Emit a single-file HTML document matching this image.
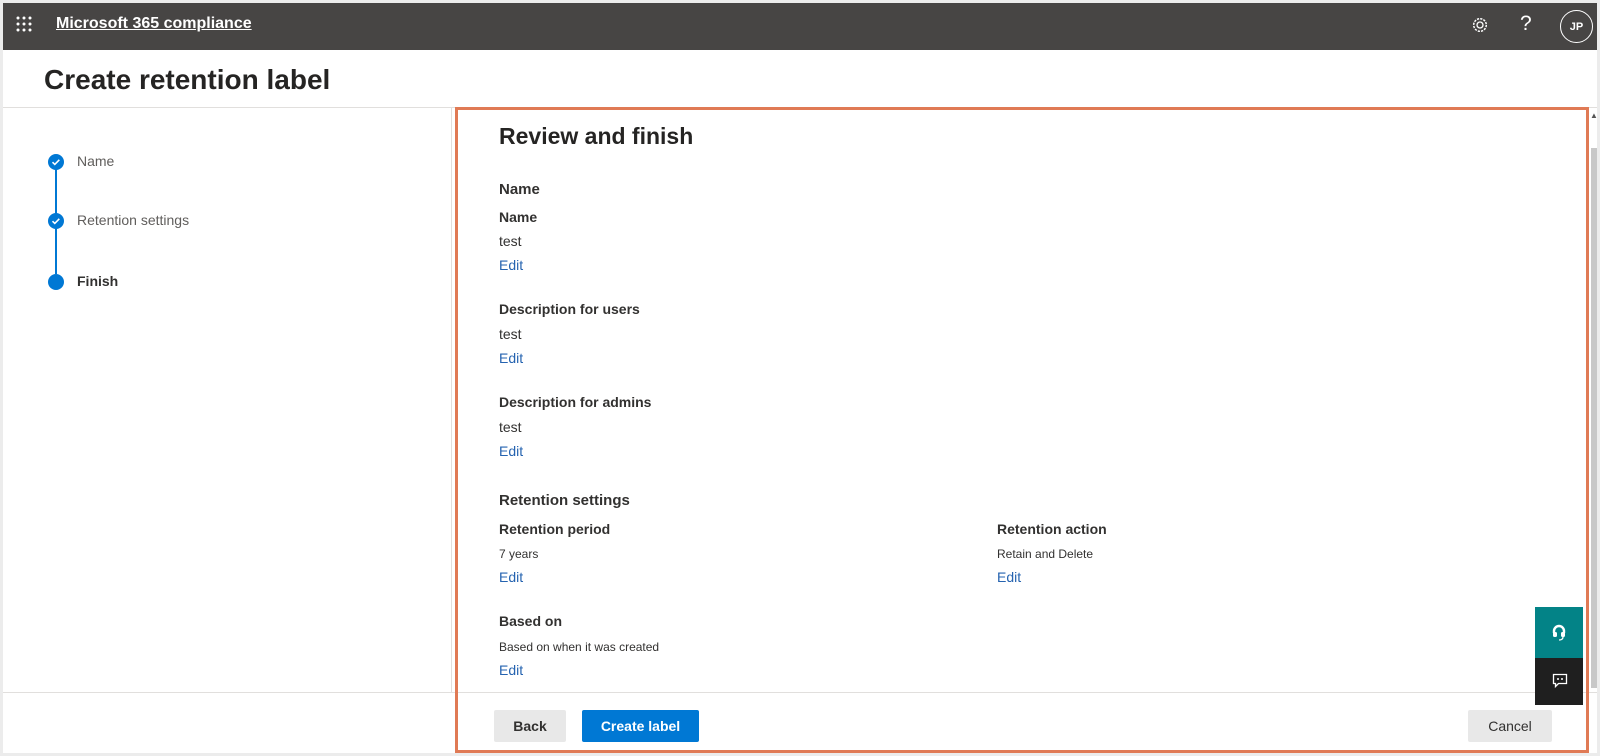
<!DOCTYPE html>
<html><head><meta charset="utf-8"><style>
*{margin:0;padding:0;box-sizing:border-box}
body{width:1600px;height:756px;background:#ececec;font-family:"Segoe UI","Liberation Sans",sans-serif;color:#323130;position:relative;overflow:hidden}
.app{position:absolute;left:3px;top:3px;width:1594px;height:750px;background:#fff}
.top{position:absolute;left:0;top:0;width:1594px;height:47px;background:#474544;color:#fff}
.abs{position:absolute}
.t{position:absolute;white-space:nowrap}
.edit{color:#2563b0;font-size:14px}
.lbl{font-size:14px;font-weight:600}
.val{font-size:14px}
.sm{font-size:12px}
.btn{position:absolute;height:32px;border-radius:2px;font-size:14px;font-weight:600;display:flex;align-items:center;justify-content:center}
</style></head><body>
<div class="app">
 <div class="top">
  <svg class="abs" style="left:13px;top:13px" width="16" height="16"><g fill="#fff">
   <circle cx="2" cy="2" r="1.5"/><circle cx="8" cy="2" r="1.5"/><circle cx="14" cy="2" r="1.5"/>
   <circle cx="2" cy="8" r="1.5"/><circle cx="8" cy="8" r="1.5"/><circle cx="14" cy="8" r="1.5"/>
   <circle cx="2" cy="14" r="1.5"/><circle cx="8" cy="14" r="1.5"/><circle cx="14" cy="14" r="1.5"/></g></svg>
  <div class="t" style="left:53px;top:12px;font-size:16px;font-weight:700;text-decoration:underline">Microsoft 365 compliance</div>
  <svg class="abs" style="left:1468px;top:13px" width="18" height="18" viewBox="0 0 18 18"><circle cx="9" cy="9" r="3" fill="none" stroke="#fff" stroke-width="1.3"/><circle cx="9" cy="9" r="6.3" fill="none" stroke="#fff" stroke-width="1.5" stroke-dasharray="2.2 1.1"/></svg>
  <div class="t" style="left:1517px;top:9px;font-size:21px;font-weight:300">?</div>
  <div class="abs" style="left:1557px;top:7px;width:33px;height:33px;border:1.5px solid #fff;border-radius:50%;font-size:11px;display:flex;align-items:center;justify-content:center;font-weight:600">JP</div>
 </div>
 <div class="t" style="left:41px;top:61px;font-size:28px;font-weight:700;color:#252423">Create retention label</div>
 <div class="abs" style="left:0;top:104px;width:1594px;height:1px;background:#e1dfdd"></div>
 <div class="abs" style="left:0;top:689px;width:1594px;height:1px;background:#e1dfdd"></div>
 <div class="abs" style="left:448px;top:105px;width:1px;height:584px;background:#e1dfdd"></div>
 <div class="abs" style="left:52px;top:166px;width:2px;height:46px;background:#0078d4"></div>
 <div class="abs" style="left:52px;top:225px;width:2px;height:46px;background:#0078d4"></div>
 <svg class="abs" style="left:45px;top:151px" width="16" height="16"><circle cx="8" cy="8" r="8" fill="#0078d4"/><path d="M4.5 8.2l2.3 2.2 4.5-4.6" stroke="#fff" stroke-width="1.6" fill="none"/></svg>
 <svg class="abs" style="left:45px;top:210px" width="16" height="16"><circle cx="8" cy="8" r="8" fill="#0078d4"/><path d="M4.5 8.2l2.3 2.2 4.5-4.6" stroke="#fff" stroke-width="1.6" fill="none"/></svg>
 <svg class="abs" style="left:45px;top:271px" width="16" height="16"><circle cx="8" cy="8" r="8" fill="#0078d4"/></svg>
 <div class="t" style="left:74px;top:150px;font-size:14px;color:#605e5c">Name</div>
 <div class="t" style="left:74px;top:209px;font-size:14px;color:#605e5c">Retention settings</div>
 <div class="t" style="left:74px;top:270px;font-size:14px;font-weight:700">Finish</div>
 <div class="t" style="left:496px;top:120px;font-size:23px;font-weight:700;color:#252423">Review and finish</div>
 <div class="t" style="left:496px;top:178px;font-size:15px;font-weight:700">Name</div>
 <div class="t lbl" style="left:496px;top:206px">Name</div>
 <div class="t val" style="left:496px;top:230px">test</div>
 <div class="t edit" style="left:496px;top:254px">Edit</div>
 <div class="t lbl" style="left:496px;top:298px">Description for users</div>
 <div class="t val" style="left:496px;top:323px">test</div>
 <div class="t edit" style="left:496px;top:347px">Edit</div>
 <div class="t lbl" style="left:496px;top:391px">Description for admins</div>
 <div class="t val" style="left:496px;top:416px">test</div>
 <div class="t edit" style="left:496px;top:440px">Edit</div>
 <div class="t" style="left:496px;top:489px;font-size:15px;font-weight:700">Retention settings</div>
 <div class="t lbl" style="left:496px;top:518px">Retention period</div>
 <div class="t sm" style="left:496px;top:544px">7 years</div>
 <div class="t edit" style="left:496px;top:566px">Edit</div>
 <div class="t lbl" style="left:994px;top:518px">Retention action</div>
 <div class="t sm" style="left:994px;top:544px">Retain and Delete</div>
 <div class="t edit" style="left:994px;top:566px">Edit</div>
 <div class="t lbl" style="left:496px;top:610px">Based on</div>
 <div class="t sm" style="left:496px;top:637px">Based on when it was created</div>
 <div class="t edit" style="left:496px;top:659px">Edit</div>
 <div class="btn" style="left:491px;top:707px;width:72px;background:#e8e8e8">Back</div>
 <div class="btn" style="left:579px;top:707px;width:117px;background:#0078d4;color:#fff">Create label</div>
 <div class="btn" style="left:1465px;top:707px;width:84px;background:#e8e8e8;font-weight:400">Cancel</div>
 <div class="abs" style="left:1588px;top:145px;width:6px;height:540px;background:#c8c8c8"></div>
 <div class="t" style="left:1587px;top:108px;font-size:8px;color:#555">▲</div>
 <div class="abs" style="left:1532px;top:604px;width:48px;height:51px;background:#038387"></div>
 <svg class="abs" style="left:1548px;top:620px" width="16" height="18"><path d="M3 10V8a5 5 0 0110 0v2" stroke="#fff" stroke-width="2.4" fill="none"/><rect x="2" y="9" width="4" height="5" rx="1.5" fill="#fff"/><rect x="10" y="9" width="4" height="5" rx="1.5" fill="#fff"/><path d="M12 14q0 3-4 3" stroke="#fff" stroke-width="1.3" fill="none"/></svg>
 <div class="abs" style="left:1532px;top:655px;width:48px;height:47px;background:#1f1f1f"></div>
 <svg class="abs" style="left:1549px;top:670px" width="16" height="16"><path d="M1.5 1.5h13v9h-8l-3 3v-3h-2z" stroke="#fff" stroke-width="1.3" fill="none"/><circle cx="6" cy="6" r="1" fill="#fff"/><circle cx="10" cy="6" r="1" fill="#fff"/></svg>
 <div class="abs" style="left:452px;top:104px;width:1134px;height:646px;border:3px solid #e07a55"></div>
</div>
</body></html>
